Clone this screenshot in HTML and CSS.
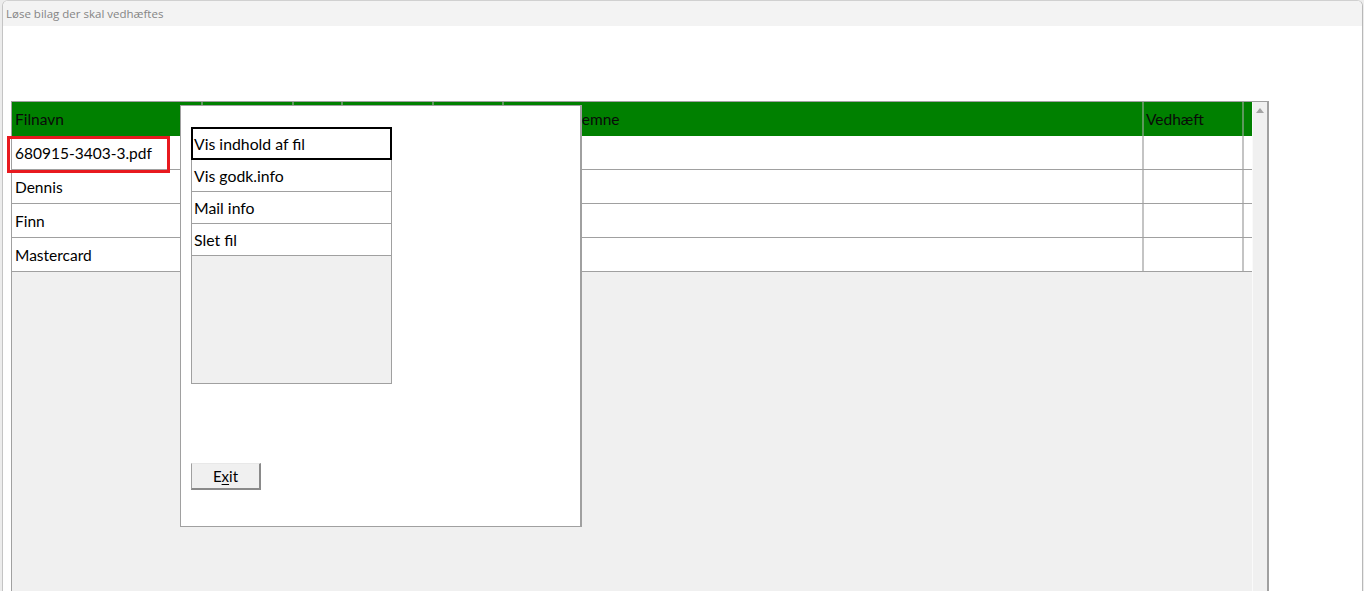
FILE: index.html
```html
<!DOCTYPE html>
<html lang="da">
<head>
<meta charset="utf-8">
<title>Løse bilag der skal vedhæftes</title>
<link rel="stylesheet" href="styles.css">
</head>
<body>
<div class="window">
  <div class="titlebar">Løse bilag der skal vedhæftes</div>
  <div class="content">
    <div class="grid">
      <div class="grid-main">
        <div class="row head">
          <div class="cell">Filnavn</div>
          <div class="cell"></div>
          <div class="cell"></div>
          <div class="cell"></div>
          <div class="cell"></div>
          <div class="cell subject">Bilagsemne</div>
          <div class="cell">Vedhæft</div>
          <div class="cell"></div>
        </div>
        <div class="row">
          <div class="cell">680915-3403-3.pdf</div>
          <div class="cell"></div><div class="cell"></div><div class="cell"></div><div class="cell"></div>
          <div class="cell"></div><div class="cell"></div><div class="cell"></div>
        </div>
        <div class="row">
          <div class="cell">Dennis</div>
          <div class="cell"></div><div class="cell"></div><div class="cell"></div><div class="cell"></div>
          <div class="cell"></div><div class="cell"></div><div class="cell"></div>
        </div>
        <div class="row">
          <div class="cell">Finn</div>
          <div class="cell"></div><div class="cell"></div><div class="cell"></div><div class="cell"></div>
          <div class="cell"></div><div class="cell"></div><div class="cell"></div>
        </div>
        <div class="row">
          <div class="cell">Mastercard</div>
          <div class="cell"></div><div class="cell"></div><div class="cell"></div><div class="cell"></div>
          <div class="cell"></div><div class="cell"></div><div class="cell"></div>
        </div>
      </div>
      <div class="scrollbar"><span class="arrow-up"></span></div>

      <div class="highlight"></div>

      <div class="dialog">
        <div class="listbox">
          <div class="item selected">Vis indhold af fil</div>
          <div class="item">Vis godk.info</div>
          <div class="item">Mail info</div>
          <div class="item">Slet fil</div>
          <div class="list-empty"></div>
        </div>
        <button class="exit">E<u>x</u>it</button>
      </div>
    </div>
  </div>
</div>
</body>
</html>
```

FILE: styles.css
```css
* { box-sizing: border-box; }

html, body {
  margin: 0;
  padding: 0;
  height: 591px;
  overflow: hidden;
}

body {
  background: #ececec;
  font-family: "Lato", "Liberation Sans", sans-serif;
}

.window {
  margin-left: 2px;
  width: 1361px;
  height: 591px;
  background: #fff;
  border-left: 1px solid #c4c4c4;
  border-right: 1px solid #b8b8b8;
  border-top: 1px solid #d0d0d0;
  border-radius: 6px 6px 0 0;
  overflow: hidden;
  display: flex;
  flex-direction: column;
}

.titlebar {
  height: 25px;
  background: #f3f3f3;
  color: #858585;
  font-family: "Open Sans", "Noto Sans", sans-serif;
  font-size: 11.5px;
  line-height: 25px;
  padding-left: 3px;
}

.content {
  flex: 1;
  padding: 75px 0 0 8px;
  overflow: hidden;
}

.grid {
  position: relative;
  display: flex;
  width: 1258px;
  height: 520px;
  border: 1px solid #a0a0a0;
  border-right: 2px solid #a0a0a0;
  background: #f0f0f0;
}

.grid-main {
  width: 1240px;
  display: flex;
  flex-direction: column;
}

.row {
  display: grid;
  grid-template-columns: 189px 91px 49px 91px 70px 640px 100px 10px;
  height: 34px;
  background: #fff;
  border-bottom: 1px solid #a0a0a0;
  font-size: 15.5px;
  color: #000;
}

.row .cell {
  border-left: 2px solid #c4c4c4;
  padding-left: 2px;
  display: flex;
  align-items: center;
  white-space: nowrap;
  overflow: hidden;
}

.row .cell:first-child {
  border-left: none;
  padding-left: 3px;
}

.row.head {
  background: #008000;
  border-bottom: none;
  color: #0a0a0a;
}

.row.head .cell {
  border-left: 2px solid #5c985c;
}

.row.head .cell:first-child {
  border-left: none;
}

.row.head .cell.subject {
  padding-left: 38px;
}

.scrollbar {
  width: 16px;
  background: #f0f0f0;
  border-left: 1px solid #fafafa;
  display: flex;
  justify-content: center;
  padding-top: 6px;
}

.arrow-up {
  width: 0;
  height: 0;
  border-left: 4px solid transparent;
  border-right: 4px solid transparent;
  border-bottom: 5px solid #a3a3a3;
}

.highlight {
  position: absolute;
  left: -5px;
  top: 34px;
  width: 163px;
  height: 37px;
  border: 3px solid #e8191f;
}

.dialog {
  position: absolute;
  left: 168px;
  top: 3px;
  width: 402px;
  height: 422px;
  background: #fff;
  border: 1px solid #a0a0a0;
  border-right: 2px solid #a0a0a0;
  padding: 21px 0 0 10px;
  display: flex;
  flex-direction: column;
  align-items: flex-start;
}

.listbox {
  width: 201px;
  height: 257px;
  border: 1px solid #a0a0a0;
  background: #f0f0f0;
  display: flex;
  flex-direction: column;
}

.item {
  height: 32px;
  background: #fff;
  border-bottom: 1px solid #a0a0a0;
  font-size: 15.8px;
  color: #000;
  padding-left: 2px;
  display: flex;
  align-items: center;
}

.item.selected {
  margin: -1px -1px 0 -1px;
  height: 33px;
  border: 2px solid #000;
  padding-left: 1px;
}

.list-empty {
  flex: 1;
  background: #f0f0f0;
}

.exit {
  margin-top: 79px;
  width: 70px;
  height: 27px;
  padding: 0;
  background: #f0f0f0;
  border-top: 1px solid #e8e8e8;
  border-left: 1px solid #a0a0a0;
  border-right: 2px solid #8a8a8a;
  border-bottom: 2px solid #8a8a8a;
  font-family: "Lato", "Liberation Sans", sans-serif;
  font-size: 15px;
  color: #000;
}

.exit u {
  text-decoration-thickness: 1px;
  text-underline-offset: 2px;
}
```
